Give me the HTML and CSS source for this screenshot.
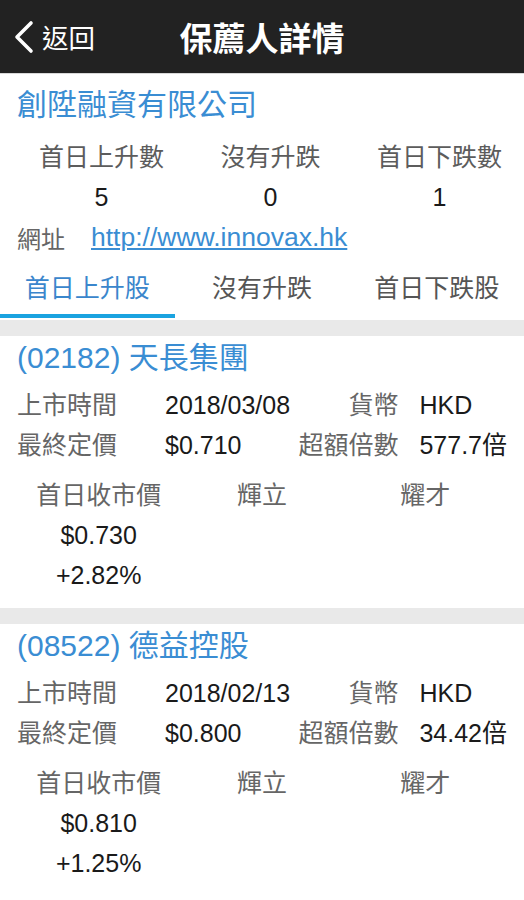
FILE: index.html
```html
<!DOCTYPE html>
<html lang="zh-Hant">
<head>
  <meta charset="UTF-8" />
  <title>保薦人詳情</title>
  <link rel="stylesheet" href="styles.css">
</head>
<body>
  <header class="topbar">
    <a class="back" href="#">
      <svg class="chevron" width="24" height="34" viewBox="0 0 24 34">
        <path d="M19 3 L5 17 L19 31" fill="none" stroke="#fff" stroke-width="3.6" stroke-linecap="round" stroke-linejoin="round"/>
      </svg>
      <span>返回</span>
    </a>
    <h1 class="title">保薦人詳情</h1>
    <div></div>
  </header>

  <section class="sponsor">
    <h2 class="sponsor-name">創陞融資有限公司</h2>
    <div class="stats">
      <div class="stat-label">首日上升數</div>
      <div class="stat-label">沒有升跌</div>
      <div class="stat-label">首日下跌數</div>
      <div class="stat-num">5</div>
      <div class="stat-num">0</div>
      <div class="stat-num">1</div>
    </div>
    <div class="site">
      <span class="site-label">網址</span>
      <a class="site-link" href="#">http://www.innovax.hk</a>
    </div>
  </section>

  <nav class="tabs">
    <div class="tab active">首日上升股</div>
    <div class="tab">沒有升跌</div>
    <div class="tab">首日下跌股</div>
  </nav>

  <div class="list">
    <article class="card">
      <h3 class="card-title">(02182) 天長集團</h3>
      <div class="info">
        <span class="label">上市時間</span>
        <span class="val">2018/03/08</span>
        <span class="label right">貨幣</span>
        <span class="val">HKD</span>
        <span class="label">最終定價</span>
        <span class="val">$0.710</span>
        <span class="label right">超額倍數</span>
        <span class="val">577.7倍</span>
      </div>
      <div class="firstday">
        <div class="col">
          <span class="label">首日收市價</span>
          <span class="val">$0.730</span>
          <span class="val">+2.82%</span>
        </div>
        <div class="col"><span class="label">輝立</span></div>
        <div class="col"><span class="label">耀才</span></div>
      </div>
    </article>

    <article class="card">
      <h3 class="card-title">(08522) 德益控股</h3>
      <div class="info">
        <span class="label">上市時間</span>
        <span class="val">2018/02/13</span>
        <span class="label right">貨幣</span>
        <span class="val">HKD</span>
        <span class="label">最終定價</span>
        <span class="val">$0.800</span>
        <span class="label right">超額倍數</span>
        <span class="val">34.42倍</span>
      </div>
      <div class="firstday">
        <div class="col">
          <span class="label">首日收市價</span>
          <span class="val">$0.810</span>
          <span class="val">+1.25%</span>
        </div>
        <div class="col"><span class="label">輝立</span></div>
        <div class="col"><span class="label">耀才</span></div>
      </div>
    </article>
  </div>
</body>
</html>
```

FILE: styles.css
```css
body {
  margin: 0;
  font-family: "Liberation Sans", "Noto Sans CJK TC", sans-serif;
  background: #fff;
  color: #1a1a1a;
  overflow: hidden;
}

h1, h2, h3 {
  margin: 0;
  font-weight: normal;
}

/* top bar */
.topbar {
  display: grid;
  grid-template-columns: 1fr auto 1fr;
  align-items: center;
  height: 73px;
  background: #222;
  border-bottom: 1px solid #d8d8d8;
}

.back {
  display: flex;
  align-items: center;
  gap: 6px;
  padding-left: 12px;
  color: #fff;
  text-decoration: none;
  font-size: 26.5px;
}

.chevron {
  display: block;
}

.title {
  color: #fff;
  font-size: 33px;
  font-weight: bold;
}

/* sponsor summary */
.sponsor {
  padding: 0 0 0 17px;
}

.sponsor-name {
  color: #3a8dd3;
  font-size: 30px;
  line-height: 62px;
}

.stats {
  display: grid;
  grid-template-columns: repeat(3, 1fr);
  text-align: center;
}

.stat-label {
  font-size: 25px;
  color: #5c5c5c;
  line-height: 42px;
}

.stat-num {
  font-size: 25px;
  line-height: 38px;
}

.site {
  display: flex;
  align-items: center;
  gap: 26px;
  height: 42px;
}

.site-label {
  color: #666;
  font-size: 24px;
}

.site-link {
  color: #3a8dd3;
  font-size: 26.5px;
}

/* tabs */
.tabs {
  display: grid;
  grid-template-columns: repeat(3, 1fr);
  margin-bottom: 2px;
}

.tab {
  text-align: center;
  font-size: 25px;
  color: #555;
  height: 56px;
  line-height: 60px;
  border-bottom: 4px solid transparent;
}

.tab.active {
  color: #3a86cc;
  border-bottom-color: #1aa3e0;
}

/* stock cards */
.list {
  background: #e9e9e9;
  padding-top: 16px;
}

.card {
  background: #fff;
  height: 272px;
  margin-bottom: 16px;
  padding: 0 17px;
}

.card-title {
  color: #3a8dd3;
  font-size: 30px;
  line-height: 44px;
  margin-bottom: 5px;
}

.info {
  display: grid;
  grid-template-columns: 148px 1fr auto auto;
  align-items: center;
  white-space: nowrap;
}

.info > span {
  line-height: 40px;
}

.info .right {
  justify-self: end;
  padding-right: 21px;
}

.label {
  color: #666;
  font-size: 25px;
}

.val {
  font-size: 25px;
  color: #1a1a1a;
}

.firstday {
  display: grid;
  grid-template-columns: repeat(3, 1fr);
  margin-top: 10px;
}

.col {
  display: flex;
  flex-direction: column;
  align-items: center;
}

.col > span {
  line-height: 40px;
}
```
